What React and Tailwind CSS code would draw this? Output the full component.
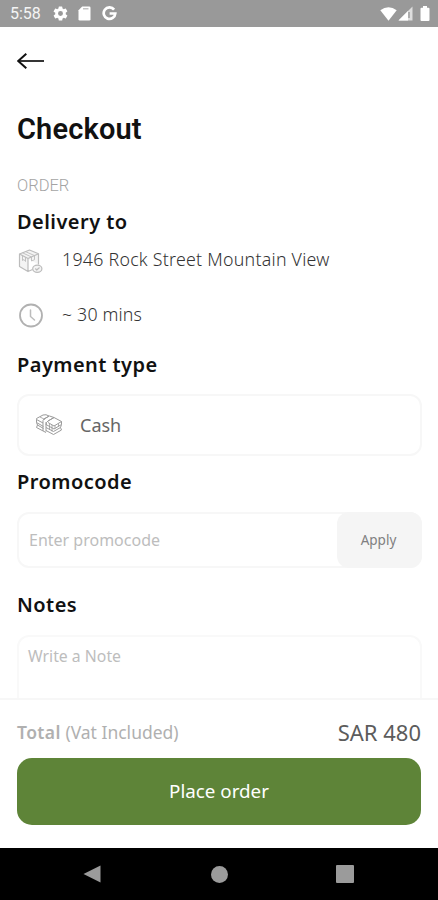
import { useState } from 'react';

function StatusBar() {
  return (
    <div className="flex h-[27px] shrink-0 items-center bg-[#999999] px-[10px] text-white">
      <span className="w-[42px] font-['Roboto',sans-serif] text-[16px] leading-[27px] text-[#f4f4f4]">5:58</span>
      <svg className="h-[17px] w-[17px]" viewBox="0 0 24 24" fill="currentColor">
        <path d="M19.4 13a7.500 7.500 0 0 0 0-2l2.100-1.650c.2-.15.25-.42.12-.64l-2-3.460a.5.5 0 0 0-.6-.22l-2.500 1a7.300 7.300 0 0 0-1.700-.98l-.38-2.650A.5.5 0 0 0 14 2h-4a.5.5 0 0 0-.5.420l-.37 2.650c-.6.250-1.170.580-1.700.980l-2.500-1a.5.5 0 0 0-.6.220l-2 3.460c-.13.220-.07.490.120.640L4.600 11a7.500 7.500 0 0 0 0 2l-2.150 1.650a.5.5 0 0 0-.12.640l2 3.460c.12.220.39.300.6.220l2.500-1c.530.400 1.080.730 1.700.980l.37 2.650c.04.240.250.400.5.400h4c.25 0 .46-.16.5-.4l.38-2.650a7 7 0 0 0 1.700-.98l2.500 1c.22.080.480 0 .6-.22l2-3.460a.5.5 0 0 0-.12-.64L19.400 13zM12 15.500a3.500 3.500 0 1 1 0-7 3.500 3.500 0 0 1 0 7z" />
      </svg>
      <svg className="ml-[9px] h-[15px] w-[13px]" viewBox="0 0 13 15">
        <path d="M4.200 0.500H11.200Q12.500 0.500 12.500 1.800V13.200Q12.500 14.500 11.200 14.500H1.800Q0.500 14.500 0.500 13.200V4.200Z" fill="currentColor" />
        <path d="M5 2.800H10.500" stroke="#b3b3b3" strokeWidth="1.200" />
      </svg>
      <svg className="ml-[11px] h-[15px] w-[15px]" viewBox="0 0 15 15" fill="none" stroke="currentColor" strokeWidth="2.700">
        <path d="M12.100 3.600A5.800 5.800 0 1 0 13.300 7.500H7.600" />
      </svg>
      <svg className="ml-auto h-[14px] w-[17px]" viewBox="0 0 17 14" fill="currentColor">
        <path d="M0.300 3.200Q8.500 -2.800 16.700 3.200L8.500 13.700Z" />
      </svg>
      <svg className="ml-[1px] h-[15px] w-[15px]" viewBox="0 0 15 15">
        <path d="M14.500 0.500V14.500H0.500Z" fill="#dedede" />
        <path d="M10 5V14.500H0.500Z" fill="currentColor" />
        <path d="M11 6V12" stroke="#8d8d8d" strokeWidth="1.200" />
      </svg>
      <svg className="ml-[7px] mr-[-2px] h-[15px] w-[10px]" viewBox="0 0 10 15" fill="currentColor">
        <path d="M3 0H7V1.700H8.500Q9.500 1.700 9.500 2.700V14Q9.500 15 8.500 15H1.500Q0.500 15 0.500 14V2.700Q0.500 1.700 1.500 1.700H3Z" />
      </svg>
    </div>
  );
}

function BackArrow() {
  return (
    <svg className="h-[18px] w-[28px]" viewBox="0 0 28 18" fill="none" stroke="#111111">
      <path d="M2 9H27" strokeWidth="1.700" />
      <path d="M9.300 1.700L1.200 9L9.300 16.300" strokeWidth="2" />
    </svg>
  );
}

function BoxIcon() {
  return (
    <svg className="h-[26px] w-[26px]" viewBox="0 0 26 26" fill="none" stroke="#bcbcbc" strokeWidth="1.200" strokeLinejoin="round">
      <path d="M2.500 7L12.500 3L21.500 6.800V17.500M21.500 6.800L11 11.500L2.500 7V19.500L11 24.500V11.500M11 24.500L15.500 22.500" fill="#f4f4f4" />
      <path d="M5.500 5.800L14.500 10M8.500 4.600L17.500 8.600M5.500 8.700V13.500L7 12.500L8.500 14.500V10.300M14.500 10V14L17.500 12.700V8.600" strokeWidth="0.900" />
      <ellipse cx="20.300" cy="21.700" rx="4.600" ry="3.600" fill="#f4f4f4" />
      <path d="M18.300 21.500L19.800 23L22.500 20.500" />
    </svg>
  );
}

function ClockIcon() {
  return (
    <svg className="h-[26px] w-[26px]" viewBox="0 0 26 26" fill="none" stroke="#b1b1b1" strokeLinecap="round">
      <circle cx="14" cy="13.500" r="11" strokeWidth="1.800" />
      <path d="M13.500 8V14.500L17.500 18" strokeWidth="1.500" stroke="#bcbcbc" />
    </svg>
  );
}

function CashIcon() {
  return (
    <svg className="h-[24px] w-[28px]" viewBox="0 0 28 24" fill="none" stroke="#9b9b9b" strokeWidth="1" strokeLinejoin="round">
      <path d="M1.500 5.500L8 2Q11 1 14 3L9 6Q7.500 7 8 10L1.500 6.500ZM1.500 6.500V9.500L8.500 13.500M1.500 9.500L2.500 12L8.500 15.500M2.500 12L1.500 14.500L11 19.500" />
      <path d="M8 10V18M11 9V18.500M9 6L14.500 3L19 4.500L13 8Q11 9 11 12" />
      <path d="M13 8L19 4.500L26.500 8.500L19 13L13 9.500M11 11.500L19 16L26.500 11.500V8.500M26.500 11.500L25.500 14.500L18.500 18.500L11 14.500M25.500 14.500L26.500 17L18.500 21.500L11 17.500" />
      <path d="M14.500 10.500V17M17 12V18.500M20 12.500V15.500M23.500 10.500V13.500M5 4L10 6.500" strokeWidth="0.800" />
    </svg>
  );
}

function SectionTitle({ children, className }) {
  return (
    <h2 className={`h-[30px] shrink-0 text-[20px] font-semibold leading-[30px] tracking-[0.450px] text-[#111111] ${className}`}>
      {children}
    </h2>
  );
}

export default function App() {
  const [promocode, setPromocode] = useState('');
  const [note, setNote] = useState('');

  return (
    <div className="flex h-[900px] w-full flex-col overflow-hidden bg-white font-['Noto_Sans','Open_Sans',sans-serif]">
      <StatusBar />

      <main className="flex min-h-0 flex-1 flex-col overflow-hidden pl-[17px] pr-[16px]">
        <button className="flex h-[68px] shrink-0 items-center" aria-label="Back">
          <BackArrow />
        </button>

        <h1 className="mt-[14px] h-[40px] shrink-0 font-['Roboto',sans-serif] text-[29px] font-semibold leading-[40px] tracking-[0.150px] text-[#111111]">
          Checkout
        </h1>

        <p className="mt-[27px] h-[20px] shrink-0 font-['Roboto',sans-serif] text-[16.500px] font-light leading-[20px] text-[#a4a4a4]">
          ORDER
        </p>

        <SectionTitle className="mt-[11px]">Delivery to</SectionTitle>
        <div className="mt-[8px] flex h-[30px] shrink-0 items-center">
          <BoxIcon />
          <span className="ml-[19px] whitespace-nowrap pb-[2px] text-[17.800px] font-light leading-[24px] tracking-[0.250px] text-[#333333]">
            1946 Rock Street Mountain View
          </span>
        </div>
        <div className="mt-[25px] flex h-[30px] shrink-0 items-center">
          <ClockIcon />
          <span className="ml-[19px] pb-[2px] text-[17.800px] font-light leading-[24px] tracking-[0.150px] text-[#333333]">~ 30 mins</span>
        </div>

        <SectionTitle className="mt-[20px]">Payment type</SectionTitle>
        <button className="mt-[14px] flex h-[62px] w-full shrink-0 items-center rounded-xl border-2 border-[#f7f7f7] px-[16px]">
          <CashIcon />
          <span className="ml-[17px] text-[18px] text-[#666666]">Cash</span>
        </button>

        <SectionTitle className="mt-[11px]">Promocode</SectionTitle>
        <div className="mt-[15px] flex h-[56px] shrink-0 rounded-xl border-2 border-[#f7f7f7]">
          <input
            className="min-w-0 flex-1 px-[10px] text-[16px] text-[#444444] outline-none placeholder:text-[#bdbdbd]"
            placeholder="Enter promocode"
            value={promocode}
            onChange={(e) => setPromocode(e.target.value)}
          />
          <button className="-my-[2px] -mr-[2px] w-[85px] rounded-xl bg-[#f5f5f5] pr-[2px] text-[13.500px] text-[#808080]">Apply</button>
        </div>

        <SectionTitle className="mt-[22px]">Notes</SectionTitle>
        <textarea
          className="mt-[15px] h-[120px] shrink-0 resize-none rounded-xl border-2 border-[#f9f9f9] px-[9px] py-[7px] text-[15.800px] leading-[24px] text-[#444444] outline-none placeholder:text-[#bdbdbd]"
          placeholder="Write a Note"
          value={note}
          onChange={(e) => setNote(e.target.value)}
        />
      </main>

      <footer className="flex h-[150px] shrink-0 flex-col border-t-2 border-[#f7f7f7] bg-white px-[17px]">
        <div className="mt-[15px] flex h-[34px] items-center justify-between">
          <span className="pt-px text-[17.500px] text-[#b0b0b0]">
            <b className="font-semibold tracking-[0.400px]">Total</b> (Vat Included)
          </span>
          <span className="text-[22px] text-[#5c5c5c]">SAR 480</span>
        </div>
        <button className="mt-[9px] h-[67px] shrink-0 rounded-[15px] bg-[#5e8438] text-[18.800px] text-white">Place order</button>
      </footer>

      <nav className="flex h-[52px] shrink-0 items-center bg-black pl-[83px]">
        <svg className="h-[18px] w-[18px]" viewBox="0 0 18 18" fill="#9b9b9b">
          <path d="M17.500 0.500V17.500L0.500 9Z" />
        </svg>
        <span className="ml-[110px] h-[17px] w-[17px] rounded-full bg-[#9b9b9b]" />
        <span className="ml-[108px] h-[18px] w-[18px] rounded-[1px] bg-[#9b9b9b]" />
      </nav>
    </div>
  );
}
